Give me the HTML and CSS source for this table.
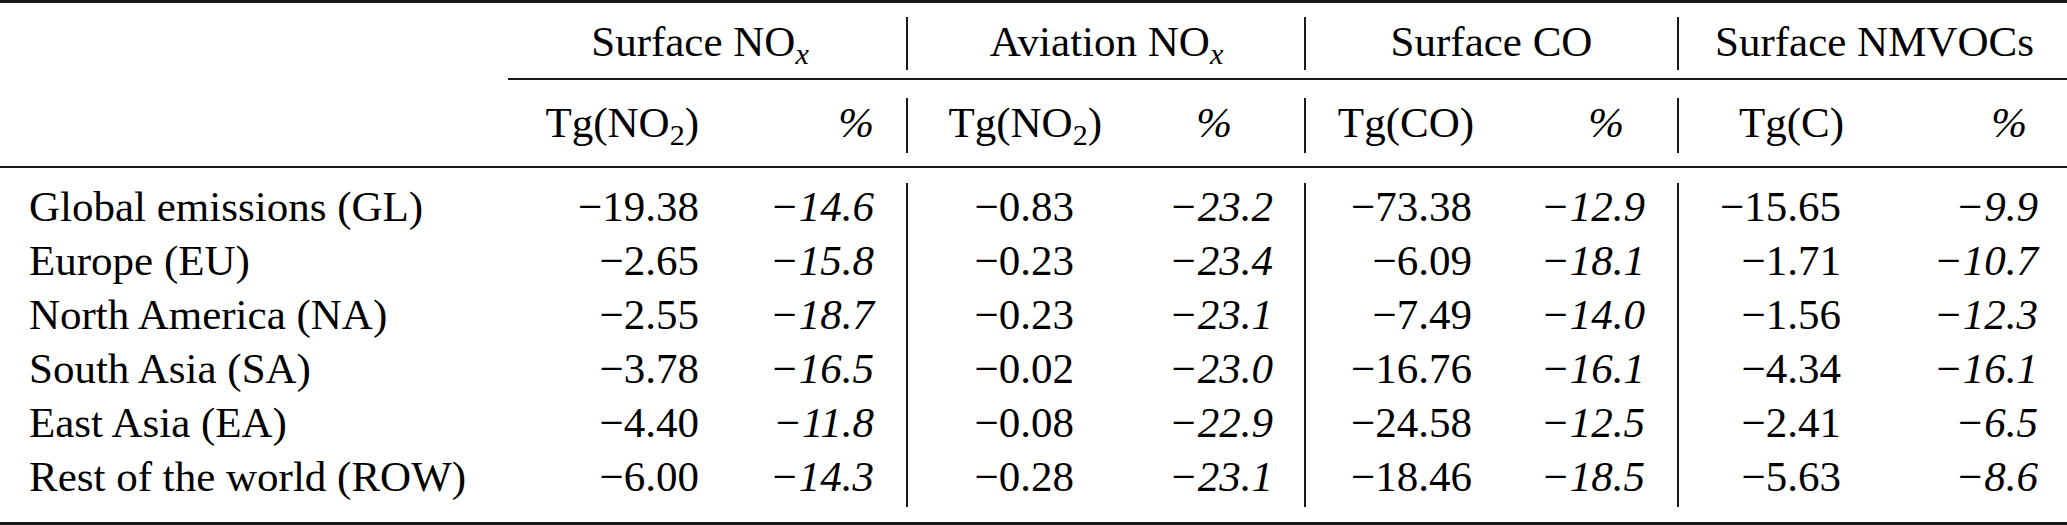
FILE: index.html
```html
<!DOCTYPE html>
<html>
<head>
<meta charset="utf-8">
<link rel="stylesheet" href="styles.css">
</head>
<body>
<div class="tbl">
  <div class="grid head1">
    <div class="blank"></div>
    <div class="grp g1">Surface NO<span class="sub it">x</span></div>
    <div class="vr"></div>
    <div class="grp">Aviation NO<span class="sub it">x</span></div>
    <div class="vr"></div>
    <div class="grp">Surface CO</div>
    <div class="vr"></div>
    <div class="grp">Surface NMVOCs</div>
  </div>
  <div class="cmid"></div>
  <div class="grid head2">
    <div class="blank"></div>
    <div class="h">Tg(NO<span class="sub">2</span>)</div>
    <div class="h it">%</div>
    <div class="vr"></div>
    <div class="h">Tg(NO<span class="sub">2</span>)</div>
    <div class="h it p4">%</div>
    <div class="vr"></div>
    <div class="h">Tg(CO)</div>
    <div class="h it p6">%</div>
    <div class="vr"></div>
    <div class="h">Tg(C)</div>
    <div class="h it p8">%</div>
  </div>
  <div class="grid body">
    <div class="vr b1"></div>
    <div class="vr b2"></div>
    <div class="vr b3"></div>

    <div class="lab">Global emissions (GL)</div>
    <div class="n">−19.38</div><div class="n it">−14.6</div>
    <div class="n q3">−0.83</div><div class="n it">−23.2</div>
    <div class="n q5">−73.38</div><div class="n it">−12.9</div>
    <div class="n q7">−15.65</div><div class="n it">−9.9</div>

    <div class="lab">Europe (EU)</div>
    <div class="n">−2.65</div><div class="n it">−15.8</div>
    <div class="n q3">−0.23</div><div class="n it">−23.4</div>
    <div class="n q5">−6.09</div><div class="n it">−18.1</div>
    <div class="n q7">−1.71</div><div class="n it">−10.7</div>

    <div class="lab">North America (NA)</div>
    <div class="n">−2.55</div><div class="n it">−18.7</div>
    <div class="n q3">−0.23</div><div class="n it">−23.1</div>
    <div class="n q5">−7.49</div><div class="n it">−14.0</div>
    <div class="n q7">−1.56</div><div class="n it">−12.3</div>

    <div class="lab">South Asia (SA)</div>
    <div class="n">−3.78</div><div class="n it">−16.5</div>
    <div class="n q3">−0.02</div><div class="n it">−23.0</div>
    <div class="n q5">−16.76</div><div class="n it">−16.1</div>
    <div class="n q7">−4.34</div><div class="n it">−16.1</div>

    <div class="lab">East Asia (EA)</div>
    <div class="n">−4.40</div><div class="n it">−11.8</div>
    <div class="n q3">−0.08</div><div class="n it">−22.9</div>
    <div class="n q5">−24.58</div><div class="n it">−12.5</div>
    <div class="n q7">−2.41</div><div class="n it">−6.5</div>

    <div class="lab">Rest of the world (ROW)</div>
    <div class="n">−6.00</div><div class="n it">−14.3</div>
    <div class="n q3">−0.28</div><div class="n it">−23.1</div>
    <div class="n q5">−18.46</div><div class="n it">−18.5</div>
    <div class="n q7">−5.63</div><div class="n it">−8.6</div>
  </div>
</div>
</body>
</html>
```

FILE: styles.css
```css
html, body {
  margin: 0;
  padding: 0;
  background: #ffffff;
}

body {
  font-family: "Liberation Serif", "Times New Roman", Times, "Tinos", "DejaVu Serif", "Noto Serif", serif;
  font-size: 43px;
  line-height: 54px;
  color: #000;
}

.tbl {
  width: 2067px;
  border-top: 3px solid #1a1a1a;
  border-bottom: 3px solid #1a1a1a;
}

.grid {
  display: grid;
  grid-template-columns: 508px 191px 175px 34px 194px 171px 33px 168px 171px 34px 165px 194px;
}

.it { font-style: italic; }

.sub {
  font-size: 70%;
  line-height: 0;
  vertical-align: -8px;
}

.vr {
  justify-self: end;
  width: 1.6px;
  background: #1a1a1a;
}

/* group header row */
.head1 .grp {
  grid-column: span 2;
  text-align: center;
  white-space: nowrap;
  padding: 11.5px 0 9.5px 32px;
}
.head1 .g1 {
  padding-left: 18px;
}
.head1 .vr {
  margin: 14px 0 8px;
}

.cmid {
  margin-left: 508px;
  height: 1.5px;
  background: #1a1a1a;
}

/* units row */
.head2 {
  border-bottom: 2px solid #1a1a1a;
}
.head2 .h {
  text-align: right;
  white-space: nowrap;
  padding: 16px 0 16.5px;
}
.head2 .p4 { padding-right: 41px; }
.head2 .p6 { padding-right: 21px; }
.head2 .p8 { padding-right: 11px; }
.head2 .vr {
  margin: 18.5px 0 13px;
}

/* body */
.body {
  grid-template-rows: repeat(6, 54px);
  padding: 11.5px 0 18px;
}
.body .vr {
  grid-row: 1 / 7;
  margin: 3.5px 0 -3.5px;
}
.body .b1 { grid-column: 4; }
.body .b2 { grid-column: 7; }
.body .b3 { grid-column: 10; }

.lab {
  padding-left: 29px;
  white-space: nowrap;
}
.n {
  text-align: right;
  white-space: nowrap;
}
.q3 { padding-right: 28px; }
.q5 { padding-right: 2px; }
.q7 { padding-right: 3px; }
```
